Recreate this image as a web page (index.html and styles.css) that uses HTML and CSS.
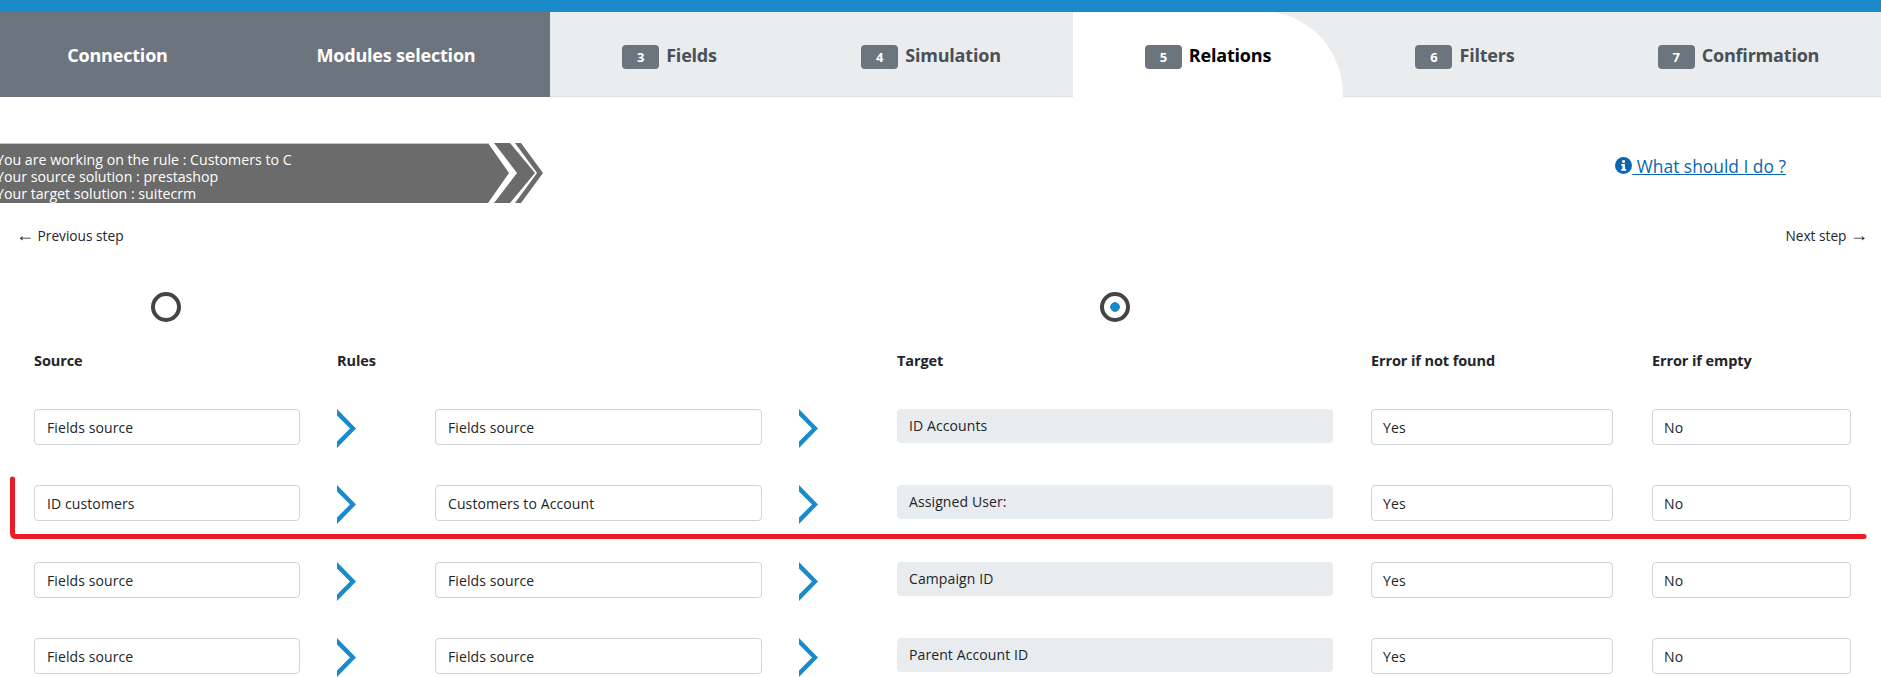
FILE: index.html
```html
<!DOCTYPE html>
<html lang="en">
<head>
  <meta charset="UTF-8" />
  <meta name="viewport" content="width=device-width, initial-scale=1.0"/>
  <title>Create rule - Relations</title>
  <link rel="stylesheet" href="styles.css">
</head>
<body>

  <div class="topbar"></div>

  <nav class="tabs">
    <a class="tab done">Connection</a>
    <a class="tab done">Modules selection</a>
    <a class="tab"><span class="badge">3</span>Fields</a>
    <a class="tab"><span class="badge">4</span>Simulation</a>
    <a class="tab active"><span class="badge">5</span>Relations</a>
    <a class="tab"><span class="badge">6</span>Filters</a>
    <a class="tab last"><span class="badge">7</span>Confirmation</a>
  </nav>

  <div class="info">
    <div class="banner">
      <svg class="banner-bg" width="545" height="60" viewBox="0 0 545 60">
        <polygon points="0,0 488,0 509,30 488,60 0,60"/>
        <polygon points="494,0 510,0 535,30 510,60 494,60 517,30"/>
        <polygon points="515,0 521,0 543,30 521,60 515,60 537,30"/>
        <rect class="banner-edge" width="489" height="1"/>
      </svg>
      <p>You are working on the rule : Customers to C</p>
      <p>Your source solution : prestashop</p>
      <p>Your target solution : suitecrm</p>
    </div>
    <a class="help">
      <svg width="17" height="17" viewBox="0 0 17 17">
        <circle cx="8.5" cy="8.5" r="8.5" fill="#0a66b2"/>
        <rect x="7.2" y="3.2" width="2.8" height="2.6" fill="#fff"/>
        <path d="M6.2 7h3.8v5h1.2v1.8H6.2V12h1.2V8.8H6.2z" fill="#fff"/>
      </svg><span> What should I do ?</span>
    </a>
  </div>

  <div class="steps">
    <a><span class="step-arrow">&larr;</span> Previous step</a>
    <a>Next step <span class="step-arrow">&rarr;</span></a>
  </div>

  <div class="rel-row radios">
    <div class="col-source"><span class="radio"></span></div>
    <div class="col-target"><span class="radio checked"></span></div>
  </div>

  <div class="rel-row heads">
    <div class="col-source">Source</div>
    <div class="col-arrow">Rules</div>
    <div class="col-target">Target</div>
    <div class="col-found">Error if not found</div>
    <div class="col-empty">Error if empty</div>
  </div>

  <div class="rel-row">
    <div class="field col-source">Fields source</div>
    <div class="col-arrow"><svg class="arrow" width="19" height="39" viewBox="0 0 19 39"><polygon points="0,0 19,19.5 0,39 0,32.5 13,19.5 0,6.5"/></svg></div>
    <div class="field col-rule">Fields source</div>
    <div class="col-arrow2"><svg class="arrow" width="19" height="39" viewBox="0 0 19 39"><polygon points="0,0 19,19.5 0,39 0,32.5 13,19.5 0,6.5"/></svg></div>
    <div class="target col-target">ID Accounts</div>
    <div class="field col-found">Yes</div>
    <div class="field col-empty">No</div>
  </div>

  <div class="rel-row">
    <div class="field col-source">ID customers</div>
    <div class="col-arrow"><svg class="arrow" width="19" height="39" viewBox="0 0 19 39"><polygon points="0,0 19,19.5 0,39 0,32.5 13,19.5 0,6.5"/></svg></div>
    <div class="field col-rule">Customers to Account</div>
    <div class="col-arrow2"><svg class="arrow" width="19" height="39" viewBox="0 0 19 39"><polygon points="0,0 19,19.5 0,39 0,32.5 13,19.5 0,6.5"/></svg></div>
    <div class="target col-target">Assigned User:</div>
    <div class="field col-found">Yes</div>
    <div class="field col-empty">No</div>
  </div>

  <div class="rel-row">
    <div class="field col-source">Fields source</div>
    <div class="col-arrow"><svg class="arrow" width="19" height="39" viewBox="0 0 19 39"><polygon points="0,0 19,19.5 0,39 0,32.5 13,19.5 0,6.5"/></svg></div>
    <div class="field col-rule">Fields source</div>
    <div class="col-arrow2"><svg class="arrow" width="19" height="39" viewBox="0 0 19 39"><polygon points="0,0 19,19.5 0,39 0,32.5 13,19.5 0,6.5"/></svg></div>
    <div class="target col-target">Campaign ID</div>
    <div class="field col-found">Yes</div>
    <div class="field col-empty">No</div>
  </div>

  <div class="rel-row">
    <div class="field col-source">Fields source</div>
    <div class="col-arrow"><svg class="arrow" width="19" height="39" viewBox="0 0 19 39"><polygon points="0,0 19,19.5 0,39 0,32.5 13,19.5 0,6.5"/></svg></div>
    <div class="field col-rule">Fields source</div>
    <div class="col-arrow2"><svg class="arrow" width="19" height="39" viewBox="0 0 19 39"><polygon points="0,0 19,19.5 0,39 0,32.5 13,19.5 0,6.5"/></svg></div>
    <div class="target col-target">Parent Account ID</div>
    <div class="field col-found">Yes</div>
    <div class="field col-empty">No</div>
  </div>

  <!-- red annotation drawn over the screenshot -->
  <svg class="markup" width="1881" height="677" viewBox="0 0 1881 677">
    <path d="M12.5 479 V533 Q12.5 536.5 16 536.5 H1864"/>
  </svg>

</body>
</html>
```

FILE: styles.css
```css
html, body {
  margin: 0;
  height: 677px;
  overflow: hidden;
}
body {
  font-family: "Open Sans", "Noto Sans", sans-serif;
  font-size: 14px;
  letter-spacing: 0.1px;
  color: #212529;
  background-color: #fff;
  position: relative;
}
.topbar {
  height: 12px;
  background-color: #1a8aca;
}

/* wizard tabs */
.tabs {
  display: grid;
  grid-template-columns: 242px 308px 239px 284px 270px 244px 294px;
  height: 85px;
  background-color: #ebecee;
  box-shadow: inset 0 -1px 0 #dee2e6;
}
.tab {
  display: flex;
  align-items: center;
  justify-content: center;
  font-size: 18px;
  font-weight: 700;
  letter-spacing: -0.2px;
  color: #495057;
}
.tab.done {
  background-color: #6c757d;
  color: #fff;
}
.tab.done:first-child {
  padding-right: 7px;
}
.tab.active {
  background-color: #fff;
  color: #000;
  border-top-right-radius: 78px 84px;
}
.tab.last {
  padding-left: 9px;
}
.badge {
  width: 37px;
  height: 24px;
  margin: 5px 7px 0 0;
  display: flex;
  align-items: center;
  justify-content: center;
  border-radius: 4px;
  background-color: #6c757d;
  color: #fff;
  font-size: 13px;
  letter-spacing: 0;
}

/* banner + help */
.info {
  display: flex;
  justify-content: space-between;
  margin-top: 46px;
  height: 60px;
}
.banner {
  position: relative;
  width: 545px;
  height: 60px;
  overflow: hidden;
  color: #fff;
  font-size: 14.2px;
  letter-spacing: 0;
  line-height: 17px;
  padding-top: 8px;
  box-sizing: border-box;
}
.banner p {
  position: relative;
  margin: 0 0 0 -4px;
}
.banner-bg {
  position: absolute;
  top: 0;
  left: 0;
  fill: #6b6b6b;
}
.banner-edge {
  fill: #c4c4c4;
}
.help {
  display: flex;
  align-items: center;
  height: 17px;
  margin: 14px 95px 0 0;
  font-size: 17.4px;
  letter-spacing: 0;
  color: #0a66b2;
  text-decoration: underline;
}
.help span {
  white-space: pre;
}

.steps {
  display: flex;
  justify-content: space-between;
  margin-top: 23px;
  padding: 0 13px 0 16px;
  font-size: 13.7px;
  letter-spacing: 0;
  line-height: 20px;
  height: 20px;
}
.step-arrow {
  font-family: "Liberation Sans", sans-serif;
  font-size: 18px;
  line-height: 1;
}

/* relations table, every row shares the same columns */
.rel-row {
  display: grid;
  grid-template-columns: 266px 61px 327px 61px 437px 244px 199px;
  column-gap: 37px;
  padding-left: 34px;
  margin-bottom: 37.33px;
}
.rel-row:last-of-type {
  margin-bottom: 0;
}
.col-source { grid-column: 1; }
.col-arrow { grid-column: 2; }
.col-rule { grid-column: 3; }
.col-arrow2 { grid-column: 4; }
.col-target { grid-column: 5; }
.col-found { grid-column: 6; }
.col-empty { grid-column: 7; }

.radios {
  margin-top: 46px;
  margin-bottom: 0;
  height: 30px;
  justify-items: center;
}
.radio {
  display: block;
  width: 30px;
  height: 30px;
  margin-right: 2px;
  box-sizing: border-box;
  border: 4px solid #444;
  border-radius: 50%;
  background-color: #fff;
}
.radio.checked {
  background: radial-gradient(circle, #1a8aca 0, #1a8aca 4.5px, #fff 5px);
}
.heads {
  margin-top: 29px;
  margin-bottom: 38px;
  font-size: 14.5px;
  font-weight: 700;
  line-height: 20px;
  letter-spacing: -0.1px;
}
.field {
  height: 36px;
  box-sizing: border-box;
  border: 1px solid #ced4da;
  border-radius: 4px;
  padding-left: 12px;
  line-height: 35px;
}
.field.col-found {
  width: 242px;
  padding-left: 11px;
}
.field.col-empty {
  padding-left: 11px;
}
.target {
  width: 436px;
  height: 34px;
  box-sizing: border-box;
  line-height: 34px;
  border-radius: 4px;
  background-color: #e9ecef;
  padding-left: 12px;
}
.arrow {
  display: block;
  fill: #1a8aca;
}

.markup {
  position: absolute;
  top: 0;
  left: 0;
  pointer-events: none;
}
.markup path {
  fill: none;
  stroke: #ed1c24;
  stroke-width: 5;
  stroke-linecap: round;
}
```
